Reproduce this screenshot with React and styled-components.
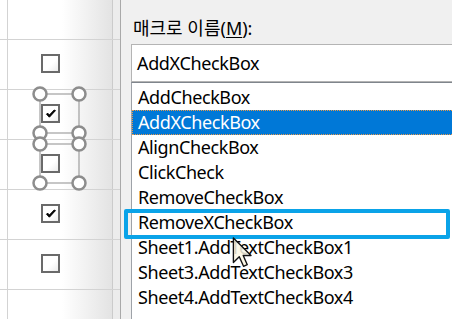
import React from "react";
import styled, { createGlobalStyle } from "styled-components";

const Global = createGlobalStyle`
  html, body { margin: 0; padding: 0; }
  body {
    width: 452px;
    height: 319px;
    overflow: hidden;
    font-family: "Noto Sans", "Noto Sans CJK KR", sans-serif;
    background: #f0f0f0;
  }
`;

const Screen = styled.div`
  display: flex;
  width: 452px;
  height: 319px;
  overflow: hidden;
`;

const Sheet = styled.div`
  width: 120px;
  flex: none;
  display: flex;
  flex-direction: column;
  border-right: 1px solid #a9a9a9;
  background: linear-gradient(
    to right,
    #ffffff 0px,
    #ffffff 62px,
    #e3e3e3 112px,
    #ececec 112px,
    #ececec 120px
  );
`;

const Row = styled.div`
  position: relative;
  flex: none;
  height: ${(p) => p.h}px;
  display: grid;
  grid-template-columns: 8px 1fr 8px;
  border-bottom: 1px solid #d3d3d3;
`;

const HeadCell = styled.div`
  border-right: 1px solid #d3d3d3;
`;

const Cell = styled.div`
  padding: 14px 0 0 33px;
`;

const EdgeCell = styled.div`
  border-left: 1px solid #cbcbcb;
`;

const Box = styled.div`
  width: 15px;
  height: 15px;
  border: 2px solid #6a6a6a;
  background: linear-gradient(135deg, #ffffff 55%, #ececec 100%);
  display: flex;
  align-items: center;
  justify-content: center;
`;

const Frame = styled.svg`
  position: absolute;
  left: 32px;
  top: -4px;
  overflow: visible;
`;

const Dialog = styled.div`
  flex: 1;
  padding: 16px 0 0 10px;
  display: flex;
  flex-direction: column;
  min-width: 0;
`;

const Label = styled.div`
  font-size: 18px;
  line-height: 24px;
  color: #000;
  padding-left: 2px;
  margin-bottom: 4px;
  white-space: nowrap;
  u { text-decoration-thickness: 1px; text-underline-offset: 2px; }
`;

const NameInput = styled.div`
  height: 36px;
  background: #fff;
  border: 1px solid #b4b4b4;
  border-right: none;
  font-size: 18px;
  letter-spacing: -0.35px;
  line-height: 36px;
  padding-left: 5px;
  white-space: nowrap;
`;

const List = styled.div`
  position: relative;
  flex: 1;
  background: #fff;
  border-top: 1px solid #7f858c;
  border-left: 1px solid #9ea2a8;
  padding-top: 2px;
`;

const Item = styled.div`
  height: 25px;
  box-sizing: border-box;
  font-size: 18px;
  letter-spacing: -0.4px;
  line-height: 23px;
  padding-left: 5px;
  white-space: nowrap;
  color: ${(p) => (p.selected ? "#fff" : "#000")};
  background: ${(p) => (p.selected ? "#0078d7" : "transparent")};
  border: 1px ${(p) => (p.selected ? "dotted #e89a4a" : "solid transparent")};
  border-right: none;
`;

const Highlight = styled.div`
  position: absolute;
  left: -8px;
  top: 126px;
  width: 318px;
  height: 22px;
  border: 4px solid #0aa3e8;
  border-radius: 2px;
`;

const Cursor = styled.svg`
  position: absolute;
  left: 100px;
  top: 154px;
`;

function Check() {
  return (
    <svg width="12" height="10" viewBox="0 0 12 10">
      <path d="M1.5 5.2 L4.4 8.2 L10.5 1.6 L9.2 1 L4.4 6 L2.6 4.1 Z" fill="#000" stroke="#000" strokeWidth="1" strokeLinejoin="round" />
    </svg>
  );
}

function Handles() {
  const pts = [
    [8, 8],
    [47, 8],
    [8, 47],
    [47, 47],
  ];
  return (
    <Frame width="56" height="56" viewBox="0 0 56 56">
      <rect x="8" y="8" width="39" height="39" fill="none" stroke="#8d8d8d" strokeWidth="1" />
      {pts.map(([x, y]) => (
        <circle key={x + "-" + y} cx={x} cy={y} r="6.5" fill="#fff" stroke="#8d8d8d" strokeWidth="2.5" />
      ))}
    </Frame>
  );
}

const rows = [
  { checked: false, selected: false },
  { checked: true, selected: true },
  { checked: false, selected: true },
  { checked: true, selected: false },
  { checked: false, selected: false },
];

const macros = [
  "AddCheckBox",
  "AddXCheckBox",
  "AlignCheckBox",
  "ClickCheck",
  "RemoveCheckBox",
  "RemoveXCheckBox",
  "Sheet1.AddTextCheckBox1",
  "Sheet3.AddTextCheckBox3",
  "Sheet4.AddTextCheckBox4",
];

export default function App() {
  return (
    <>
      <Global />
      <Screen>
        <Sheet>
          <Row h={39}>
            <HeadCell />
            <div />
            <EdgeCell />
          </Row>
          {rows.map((r, i) => (
            <Row key={i} h={49}>
              <HeadCell />
              <Cell>
                <Box>{r.checked && <Check />}</Box>
              </Cell>
              <EdgeCell />
              {r.selected && <Handles />}
            </Row>
          ))}
          <Row h={40}>
            <HeadCell />
            <div />
            <EdgeCell />
          </Row>
        </Sheet>
        <Dialog>
          <Label>
            매크로 이름(<u>M</u>):
          </Label>
          <NameInput>AddXCheckBox</NameInput>
          <List>
            {macros.map((m, i) => (
              <Item key={m} selected={i === 1}>
                {m}
              </Item>
            ))}
            <Highlight />
            <Cursor width="22" height="32" viewBox="0 0 20 30">
              <path
                d="M1 1 L1 24 L6.5 18.6 L10.5 27.5 L14 26 L10.2 17.3 L17.5 17.3 Z"
                fill="#fdf8e4"
                fillOpacity="0.85"
                stroke="#111"
                strokeWidth="1.3"
                strokeLinejoin="round"
              />
            </Cursor>
          </List>
        </Dialog>
      </Screen>
    </>
  );
}
